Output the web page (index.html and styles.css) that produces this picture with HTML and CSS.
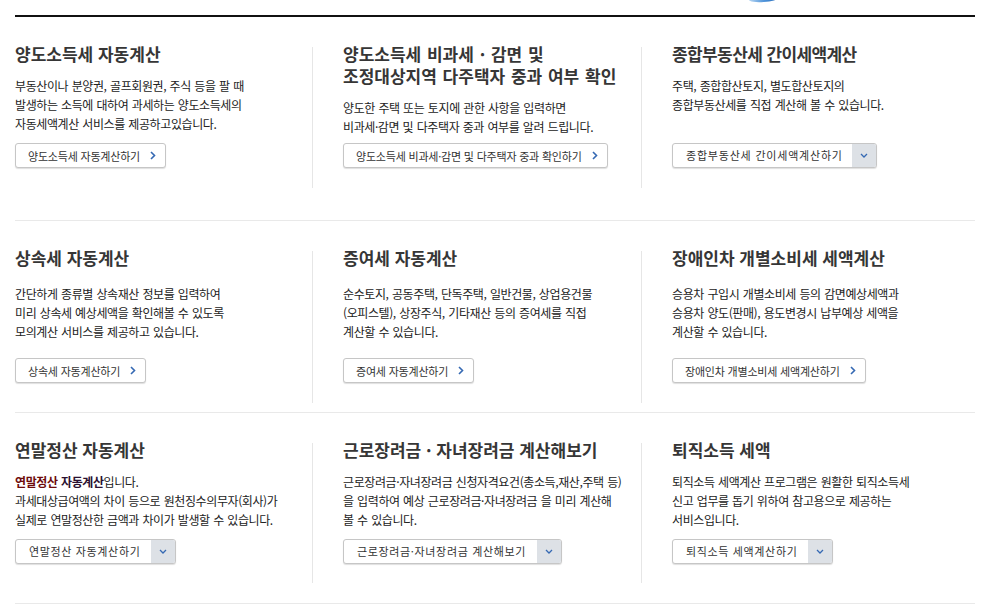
FILE: index.html
```html
<!DOCTYPE html>
<html lang="ko">
<head>
<meta charset="utf-8">
<title>세금 계산 서비스</title>
<link rel="stylesheet" href="styles.css">
</head>
<body>
<div class="page">
  <div class="deco"></div>
  <div class="board">
    <div class="row row-1">
      <div class="cell">
        <h3 class="title">양도소득세 자동계산</h3>
        <p class="desc">부동산이나 분양권, 골프회원권, 주식 등을 팔 때<br>발생하는 소득에 대하여 과세하는 양도소득세의<br>자동세액계산 서비스를 제공하고있습니다.</p>
        <a class="btn" href="#">양도소득세 자동계산하기<svg class="chev" width="6" height="9" viewBox="0 0 6 9"><polyline points="1,1 4.5,4.5 1,8" fill="none" stroke="#3569b3" stroke-width="1.6"/></svg></a>
      </div>
      <div class="cell">
        <h3 class="title title-wide"><span class="title-line">양도소득세 비과세 · 감면 및</span><span class="title-line">조정대상지역 다주택자 중과 여부 확인</span></h3>
        <p class="desc">양도한 주택 또는 토지에 관한 사항을 입력하면<br>비과세·감면 및 다주택자 중과 여부를 알려 드립니다.</p>
        <a class="btn" href="#">양도소득세 비과세·감면 및 다주택자 중과 확인하기<svg class="chev" width="6" height="9" viewBox="0 0 6 9"><polyline points="1,1 4.5,4.5 1,8" fill="none" stroke="#3569b3" stroke-width="1.6"/></svg></a>
      </div>
      <div class="cell">
        <h3 class="title title-tight">종합부동산세 간이세액계산</h3>
        <p class="desc">주택, 종합합산토지, 별도합산토지의<br>종합부동산세를 직접 계산해 볼 수 있습니다.</p>
        <div class="drop"><span class="drop-label drop-label-wide">종합부동산세 간이세액계산하기</span><span class="drop-arrow"><svg width="8" height="5" viewBox="0 0 8 5"><polyline points="1,1 4,4 7,1" fill="none" stroke="#3569b3" stroke-width="1.3"/></svg></span></div>
      </div>
    </div>

    <div class="row row-2">
      <div class="cell">
        <h3 class="title">상속세 자동계산</h3>
        <p class="desc">간단하게 종류별 상속재산 정보를 입력하여<br>미리 상속세 예상세액을 확인해볼 수 있도록<br>모의계산 서비스를 제공하고 있습니다.</p>
        <a class="btn" href="#">상속세 자동계산하기<svg class="chev" width="6" height="9" viewBox="0 0 6 9"><polyline points="1,1 4.5,4.5 1,8" fill="none" stroke="#3569b3" stroke-width="1.6"/></svg></a>
      </div>
      <div class="cell">
        <h3 class="title">증여세 자동계산</h3>
        <p class="desc">순수토지, 공동주택, 단독주택, 일반건물, 상업용건물<br>(오피스텔), 상장주식, 기타재산 등의 증여세를 직접<br>계산할 수 있습니다.</p>
        <a class="btn" href="#">증여세 자동계산하기<svg class="chev" width="6" height="9" viewBox="0 0 6 9"><polyline points="1,1 4.5,4.5 1,8" fill="none" stroke="#3569b3" stroke-width="1.6"/></svg></a>
      </div>
      <div class="cell">
        <h3 class="title">장애인차 개별소비세 세액계산</h3>
        <p class="desc">승용차 구입시 개별소비세 등의 감면예상세액과<br>승용차 양도(판매), 용도변경시 납부예상 세액을<br>계산할 수 있습니다.</p>
        <a class="btn" href="#">장애인차 개별소비세 세액계산하기<svg class="chev" width="6" height="9" viewBox="0 0 6 9"><polyline points="1,1 4.5,4.5 1,8" fill="none" stroke="#3569b3" stroke-width="1.6"/></svg></a>
      </div>
    </div>

    <div class="row row-3">
      <div class="cell">
        <h3 class="title">연말정산 자동계산</h3>
        <p class="desc"><strong class="hl"><span class="hl-a">연말정산</span> <span class="hl-b">자동계산</span></strong>입니다.<br>과세대상급여액의 차이 등으로 원천징수의무자(회사)가<br>실제로 연말정산한 금액과 차이가 발생할 수 있습니다.</p>
        <div class="drop"><span class="drop-label">연말정산 자동계산하기</span><span class="drop-arrow"><svg width="8" height="5" viewBox="0 0 8 5"><polyline points="1,1 4,4 7,1" fill="none" stroke="#3569b3" stroke-width="1.3"/></svg></span></div>
      </div>
      <div class="cell">
        <h3 class="title">근로장려금 · 자녀장려금 계산해보기</h3>
        <p class="desc">근로장려금·자녀장려금 신청자격요건(총소득,재산,주택 등)<br>을 입력하여 예상 근로장려금·자녀장려금 을 미리 계산해<br>볼 수 있습니다.</p>
        <div class="drop"><span class="drop-label">근로장려금·자녀장려금 계산해보기</span><span class="drop-arrow"><svg width="8" height="5" viewBox="0 0 8 5"><polyline points="1,1 4,4 7,1" fill="none" stroke="#3569b3" stroke-width="1.3"/></svg></span></div>
      </div>
      <div class="cell">
        <h3 class="title">퇴직소득 세액</h3>
        <p class="desc">퇴직소득 세액계산 프로그램은 원활한 퇴직소득세<br>신고 업무를 돕기 위하여 참고용으로 제공하는<br>서비스입니다.</p>
        <div class="drop"><span class="drop-label">퇴직소득 세액계산하기</span><span class="drop-arrow"><svg width="8" height="5" viewBox="0 0 8 5"><polyline points="1,1 4,4 7,1" fill="none" stroke="#3569b3" stroke-width="1.3"/></svg></span></div>
      </div>
    </div>
  </div>
</div>
</body>
</html>
```
FILE: styles.css
```css
* { box-sizing: border-box; margin: 0; padding: 0; }

body {
  margin: 0;
  background: #fff;
  color: #222;
  font-family: "Noto Sans CJK KR", "Noto Sans", sans-serif;
}

.page {
  position: relative;
  padding: 15px 8px 0 15px;
}

.deco {
  position: absolute;
  left: 749px;
  top: -4px;
  width: 29px;
  height: 6px;
  border-radius: 50%;
  background: linear-gradient(90deg, #b5d5f2, #4a90d8 55%, #2a6cb8);
  transform: rotate(-4deg);
}

.board {
  border-top: 2px solid #111;
}

.row {
  display: grid;
  grid-template-columns: 298px 329px 1fr;
  border-bottom: 1px solid #e9e9e9;
}

.row-1 { padding: 30px 0 32px; }
.row-1 .cell { height: 141px; }

.row-2 { padding: 30px 0 9px; }
.row-2 .cell { height: 152px; }
.row-2 .desc { margin-top: 15px; }

.row-3 { padding: 30px 0 20px; }
.row-3 .cell { height: 140px; padding-bottom: 19px; }

.cell {
  display: flex;
  flex-direction: column;
  align-items: flex-start;
  border-right: 1px solid #e6e6e6;
  padding-bottom: 20px;
}

.cell + .cell { padding-left: 30px; }
.cell:last-child { border-right: 0; }

.title {
  margin-top: -4px;
  font-size: 17px;
  line-height: 22px;
  font-weight: 700;
  color: #363636;
  letter-spacing: 0;
  word-spacing: 0;
  white-space: nowrap;
}

.title-wide {
  display: flex;
  flex-direction: column;
  word-spacing: 1px;
}

.title-line {
  display: block;
  height: 22px;
  overflow: visible;
}

.title-tight {
  letter-spacing: -0.6px;
}

.desc {
  margin-top: 11px;
  font-size: 12px;
  line-height: 19px;
  letter-spacing: -0.4px;
  word-spacing: 0.5px;
  color: #222;
  white-space: nowrap;
}

.hl { font-weight: 700; }
.hl-a { color: #6e0b0b; }
.hl-b { color: #2a1030; }

.btn {
  margin-top: auto;
  display: inline-flex;
  align-items: center;
  gap: 10px;
  height: 25px;
  padding: 0 9px 0 12px;
  border: 1px solid #c6c6c6;
  border-radius: 3px;
  background: #fff;
  box-shadow: 0 1px 1px rgba(0, 0, 0, 0.13);
  font-size: 11px;
  letter-spacing: -0.2px;
  color: #333;
  text-decoration: none;
  white-space: nowrap;
}

.chev { flex: none; }

.drop {
  margin-top: auto;
  display: inline-flex;
  height: 25px;
  border: 1px solid #c6c6c6;
  border-radius: 3px;
  overflow: hidden;
  background: #fff;
  box-shadow: 0 1px 1px rgba(0, 0, 0, 0.13);
}

.drop-label {
  padding: 0 11px 0 13px;
  font-size: 11px;
  line-height: 23px;
  letter-spacing: 0.65px;
  color: #333;
  white-space: nowrap;
}

.drop-label-wide {
  letter-spacing: 0.8px;
  padding-right: 9px;
}

.drop-arrow {
  width: 24px;
  display: flex;
  align-items: center;
  justify-content: center;
  background: #dde1e6;
}
```
